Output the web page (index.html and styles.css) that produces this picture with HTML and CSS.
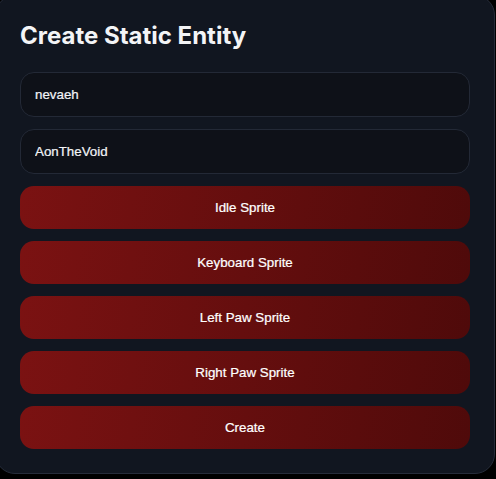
FILE: index.html
```html
<!DOCTYPE html>
<html lang="en">
<head>
<meta charset="utf-8">
<title>Create Static Entity</title>
<link rel="stylesheet" href="styles.css">
</head>
<body>
<div class="card">
  <h2 class="title">Create Static Entity</h2>
  <div class="form">
    <input class="field" type="text" value="nevaeh">
    <input class="field" type="text" value="AonTheVoid">
    <button class="btn" type="button">Idle Sprite</button>
    <button class="btn" type="button">Keyboard Sprite</button>
    <button class="btn" type="button">Left Paw Sprite</button>
    <button class="btn" type="button">Right Paw Sprite</button>
    <button class="btn" type="button">Create</button>
  </div>
</div>
</body>
</html>
```
FILE: styles.css
```css
html, body {
  margin: 0;
  padding: 0;
  background: #000000;
}

body {
  width: 496px;
  height: 479px;
  overflow: hidden;
}

.card {
  box-sizing: border-box;
  width: 500px;
  margin: -5px 0 0 -5px;
  padding: 24px;
  background: #111620;
  border: 1px solid #262c3a;
  border-radius: 20px;
}

.title {
  margin: 0 0 20px 0;
  font-family: Inter, "Liberation Sans", sans-serif;
  font-size: 24px;
  line-height: 32px;
  font-weight: 700;
  color: #f3f4f6;
}

.form {
  display: flex;
  flex-direction: column;
  gap: 12px;
}

.field {
  box-sizing: border-box;
  height: 45px;
  width: 100%;
  margin: 0;
  padding: 0 14px;
  background: #0e1118;
  border: 1px solid #232936;
  border-radius: 14px;
  outline: none;
  font-family: "Liberation Sans", Arial, sans-serif;
  font-size: 13.33px;
  font-weight: 400;
  color: #f2f4f7;
  -webkit-text-stroke: 0.22px currentColor;
}

.btn {
  box-sizing: border-box;
  height: 43px;
  width: 100%;
  margin: 0;
  padding: 0;
  border: none;
  border-radius: 14px;
  background: linear-gradient(100deg, #7b1212 0%, #4f0a0a 100%);
  font-family: "Liberation Sans", Arial, sans-serif;
  font-size: 13.33px;
  font-weight: 400;
  color: #ffffff;
  -webkit-text-stroke: 0.22px currentColor;
  cursor: pointer;
}
```
